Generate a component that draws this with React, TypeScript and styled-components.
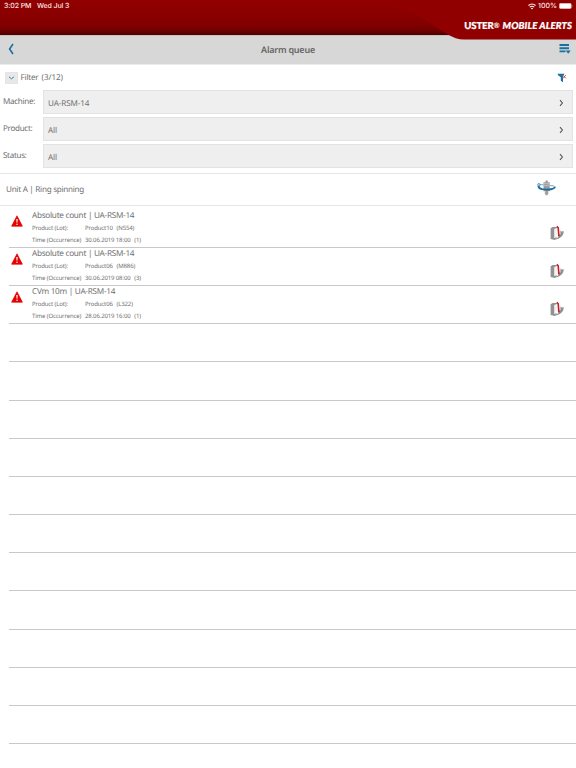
import React from "react";
import styled, { createGlobalStyle } from "styled-components";

const Global = createGlobalStyle`
  * { box-sizing: border-box; }
  html, body { margin: 0; padding: 0; background: #fff; }
  body {
    font-family: "Noto Sans", "Open Sans", sans-serif;
    color: #6f6f6f;
    text-rendering: geometricPrecision;
  }
  svg { display: block; }
`;

const Screen = styled.main`
  width: 576px;
  height: 768px;
  overflow: hidden;
  background: #fff;
`;

const Header = styled.header`
  position: relative;
  height: 35px;
  background: linear-gradient(#910000 0, #8c0000 12px, #800000 26px, #6d0000 31px, #4c0000 35px);
`;

const Swoosh = styled.svg`
  position: absolute;
  top: 0;
  right: 0;
  z-index: 1;
`;

const StatusBar = styled.div`
  position: relative;
  z-index: 2;
  display: flex;
  align-items: center;
  height: 12px;
  padding: 0 3px 0 4px;
  font: 500 7px/12px Inter, sans-serif;
  color: #f7e6e6;
`;

const Clock = styled.span`
  width: 33px;
  white-space: nowrap;
  letter-spacing: -0.1px;
`;

const DateText = styled.span`
  letter-spacing: -0.12px;
`;

const StatusRight = styled.div`
  display: flex;
  align-items: center;
  gap: 2px;
  margin-left: auto;
`;

const Brand = styled.div`
  position: relative;
  z-index: 2;
  display: flex;
  justify-content: flex-end;
  gap: 3px;
  padding: 6px 4px 0 0;
  font: 900 9.6px/15px Lato, sans-serif;
  color: #fff;
  white-space: nowrap;
  -webkit-text-stroke: 0.2px #fff;
`;

const BrandName = styled.span`
  letter-spacing: -0.15px;
`;

const BrandProduct = styled.em`
  padding-top: 1px;
  letter-spacing: 0.1px;
`;

const Reg = styled.span`
  font-size: 7.5px;
  font-weight: 700;
  vertical-align: 1px;
  -webkit-text-stroke: 0;
`;

const TitleBar = styled.nav`
  display: grid;
  grid-template-columns: 60px 1fr 60px;
  align-items: center;
  height: 30px;
  padding: 0 5px 0 8px;
  background: #d7d7d7;
  border-top: 1px solid #c9c2c2;
  border-bottom: 1px solid #ececec;
`;

const Title = styled.h1`
  margin: 0 0 0 -3px;
  font: 600 9px/14px "Noto Sans", sans-serif;
  letter-spacing: -0.23px;
  text-align: center;
  color: #666;
`;

const IconButton = styled.button<{ $end?: boolean }>`
  display: flex;
  justify-self: ${(p) => (p.$end ? "end" : "start")};
  padding: 0 0 2px;
  border: 0;
  background: none;
`;

const Filters = styled.section`
  height: 109px;
  border-bottom: 1px solid #e6e6e6;
`;

const FilterHead = styled.div`
  display: flex;
  align-items: center;
  height: 25px;
  padding: 0 9px 0 5px;
  font-size: 8.1px;
  line-height: 12px;
  letter-spacing: -0.2px;
`;

const Toggle = styled.button`
  display: flex;
  align-items: center;
  justify-content: center;
  width: 13px;
  height: 12px;
  margin-right: 2.5px;
  padding: 0;
  border: 1px solid #e4e4e4;
  background: #e8e8e8;
`;

const FilterCount = styled.span`
  margin-left: 3px;
  margin-right: auto;
  letter-spacing: -0.05px;
`;

const Field = styled.div`
  display: grid;
  grid-template-columns: 40px 530px;
  height: 24px;
  margin: 0 0 3px 3px;
`;

const Label = styled.label`
  padding-top: 6px;
  font-size: 8.1px;
  line-height: 12px;
  letter-spacing: -0.32px;
`;

const Picker = styled.div`
  display: flex;
  align-items: center;
  justify-content: space-between;
  padding: 1px 8px 0 4px;
  border: 1px solid #e3e3e3;
  background: #efefef;
  font-size: 8.1px;
  line-height: 12px;
  letter-spacing: -0.1px;
`;

const PickerValue = styled.span`
  padding-top: 2px;
`;

const UnitHeader = styled.section`
  display: flex;
  align-items: center;
  justify-content: space-between;
  height: 32px;
  padding: 0 20px 3px 6px;
  border-bottom: 1px solid #e6e6e6;
  font-size: 8.1px;
  letter-spacing: -0.28px;
`;

const UnitName = styled.span`
  padding-top: 2px;
`;

const List = styled.ul`
  margin: 0;
  padding: 3.6px 0 0 9px;
  list-style: none;
`;

const Row = styled.li`
  display: grid;
  grid-template-columns: 23px 1fr 26px;
  height: 38.19px;
  border-bottom: 1px solid #c8c8c8;
`;

const WarningCell = styled.div`
  padding: 5.5px 0 0 2px;
`;

const AlarmTitle = styled.div`
  font-size: 8.2px;
  line-height: 12px;
  letter-spacing: -0.28px;
  white-space: nowrap;
`;

const Detail = styled.div`
  display: grid;
  grid-template-columns: 53px auto 1fr;
  height: 12px;
  padding-top: 0.5px;
  font-size: 6px;
  line-height: 12px;
  letter-spacing: -0.13px;
  white-space: nowrap;
`;

const Extra = styled.span`
  margin-left: 3.8px;
`;

const NotebookCell = styled.div`
  padding-top: 15px;
`;

const Chevron = () => (
  <svg width="5" height="8" viewBox="0 0 5 8" fill="none" stroke="#555" strokeWidth="1.1">
    <path d="M1 1.2 3.4 4 1 6.8" />
  </svg>
);

const Wifi = () => (
  <svg width="8" height="7" viewBox="0 0 8 7" fill="none" stroke="#fff" strokeWidth="1.1">
    <path d="M.5 2.5Q4-.6 7.5 2.5M1.8 4.1Q4 2.3 6.2 4.1" />
    <path d="M2.9 5.2Q4 4.3 5.1 5.2L4 6.4Z" fill="#fff" stroke="none" />
  </svg>
);

const Battery = () => (
  <svg width="14" height="6" viewBox="0 0 14 6">
    <rect x=".3" y=".3" width="12" height="5.4" rx="1.4" fill="#fff" stroke="#d69b9b" strokeWidth=".5" />
    <path d="M13 2q.9 1 0 2z" fill="#e0b0b0" />
  </svg>
);

const Warning = () => (
  <svg width="12" height="12" viewBox="0 0 12 12">
    <path d="M6 .8 11.4 11.2H.6Z" fill="#e60000" stroke="#e60000" strokeWidth=".7" strokeLinejoin="round" />
    <path d="M5.3 4h1.4L6.4 7.8h-.8Z" fill="#fff" />
    <circle cx="6" cy="9.3" r=".75" fill="#fff" />
  </svg>
);

const Notebook = () => (
  <svg width="15" height="16" viewBox="0 0 15 16">
    <path d="M.6 3.2 2.6 2 6.8 1.9V13.6L4.9 14.9 .6 14Z" fill="#929292" />
    <path d="M4.2 4 7 3.1v9.2l-2.8.7Z" fill="#f3f3f3" />
    <path d="M8.2 12.2 10.4 7.8 10.6 6.6 13.8 6.2Q13.6 11 8.4 13.8L5.2 14.8Z" fill="#8e8e8e" />
    <path d="M10 5.7 11.3 5.5 11 8.5 9.8 10.5Z" fill="#bdbdbd" />
    <path d="M6.8 1.4 8.2 2.8 8.9 11.4" fill="none" stroke="#c71a25" strokeWidth="1.6" />
  </svg>
);

const Spindle = () => (
  <svg width="19" height="16" viewBox="0 0 19 16">
    <path d="M8.5.6h2.2v1.6h2v9h-1.8v1.4h.6v1.1h-.8v1.6H8.5v-1.6h-.8v-1.1h.6v-1.4H6.5v-9h2Z" fill="#9b9b9b" />
    <path d="M6.5 3.6h6.2M6.5 5.4h6.2" stroke="#d4d4d4" strokeWidth=".6" />
    <path d="M1.5 6Q1.4 8.3 5 9.2 10 10.2 15 9 18.1 8.1 17.8 6.8" fill="none" stroke="#1b6d9b" strokeWidth="1.8" />
    <path d="M3 4.7Q4.8 4.5 6.4 4.9M12.8 5.5Q17.5 5.6 17.8 6.8" fill="none" stroke="#4f91b3" strokeWidth=".8" />
    <circle cx="1.9" cy="4.8" r="1.2" fill="#fff" stroke="#1b6d9b" strokeWidth=".8" />
  </svg>
);

const fields = [
  ["Machine:", "UA-RSM-14"],
  ["Product:", "All"],
  ["Status:", "All"],
];

const alarms = [
  { title: "Absolute count | UA-RSM-14", product: "Product10", lot: "(N554)", time: "30.06.2019 18:00", count: "(1)" },
  { title: "Absolute count | UA-RSM-14", product: "Product06", lot: "(M886)", time: "30.06.2019 08:00", count: "(3)" },
  { title: "CVm 10m | UA-RSM-14", product: "Product06", lot: "(L322)", time: "28.06.2019 16:00", count: "(1)" },
];

const EMPTY_ROWS = 11;

export default function App() {
  return (
    <Screen>
      <Global />
      <Header>
        <Swoosh width="180" height="40" viewBox="0 0 180 40">
          <path d="M0 0H180V39.6H68Q60 39.6 51 34L20 14Q13 9.5 0 9Z" fill="#910000" />
        </Swoosh>
        <StatusBar>
          <Clock>3:02 PM</Clock>
          <DateText>Wed Jul 3</DateText>
          <StatusRight>
            <Wifi />
            <span>100%</span>
            <Battery />
          </StatusRight>
        </StatusBar>
        <Brand>
          <BrandName>USTER<Reg>®</Reg></BrandName>
          <BrandProduct>MOBILE ALERTS</BrandProduct>
        </Brand>
      </Header>
      <TitleBar>
        <IconButton aria-label="Back">
          <svg width="7" height="12" viewBox="0 0 7 12" fill="none" stroke="#19719e" strokeWidth="1.6">
            <path d="M5 1 1.6 6 5 11" />
          </svg>
        </IconButton>
        <Title>Alarm queue</Title>
        <IconButton $end aria-label="Menu">
          <svg width="12" height="10" viewBox="0 0 12 10" fill="#19719e">
            <path d="M.5 0h9.5v2H.5zM.5 3.2h9.5v2H.5zM.5 6.5h6v1.8h-6zM6.7 6.6H11.7L9.2 9.8z" />
          </svg>
        </IconButton>
      </TitleBar>
      <Filters>
        <FilterHead>
          <Toggle aria-label="Collapse filter">
            <svg width="7" height="4" viewBox="0 0 7 4" fill="none" stroke="#397f9f" strokeWidth="1">
              <path d="M1 .8 3.5 2.8 6 .8" />
            </svg>
          </Toggle>
          <span>Filter</span>
          <FilterCount>(3/12)</FilterCount>
          <svg width="10" height="10" viewBox="0 0 10 10">
            <path d="M.8.8H7.5L6 3.3V9.2L3.8 7.7V4.3L.8 2Z" fill="#19719e" />
            <path d="M6.2 2.4 8.6 5.2M8.6 2.4 6.2 5.2" stroke="#fff" strokeWidth="1.3" />
            <path d="M6.1 2.2 8.7 5.3M8.7 2.2 6.1 5.3" stroke="#cc3540" strokeWidth=".9" />
          </svg>
        </FilterHead>
        {fields.map(([label, value]) => (
          <Field key={label}>
            <Label>{label}</Label>
            <Picker>
              <PickerValue>{value}</PickerValue>
              <Chevron />
            </Picker>
          </Field>
        ))}
      </Filters>
      <UnitHeader>
        <UnitName>Unit A | Ring spinning</UnitName>
        <Spindle />
      </UnitHeader>
      <List>
        {alarms.map((a) => (
          <Row key={a.time}>
            <WarningCell>
              <Warning />
            </WarningCell>
            <div>
              <AlarmTitle>{a.title}</AlarmTitle>
              <Detail>
                <span>Product (Lot):</span>
                <span>{a.product}</span>
                <Extra>{a.lot}</Extra>
              </Detail>
              <Detail>
                <span>Time (Occurrence)</span>
                <span>{a.time}</span>
                <Extra>{a.count}</Extra>
              </Detail>
            </div>
            <NotebookCell>
              <Notebook />
            </NotebookCell>
          </Row>
        ))}
        {Array.from({ length: EMPTY_ROWS }, (_, i) => (
          <Row key={i} />
        ))}
      </List>
    </Screen>
  );
}
